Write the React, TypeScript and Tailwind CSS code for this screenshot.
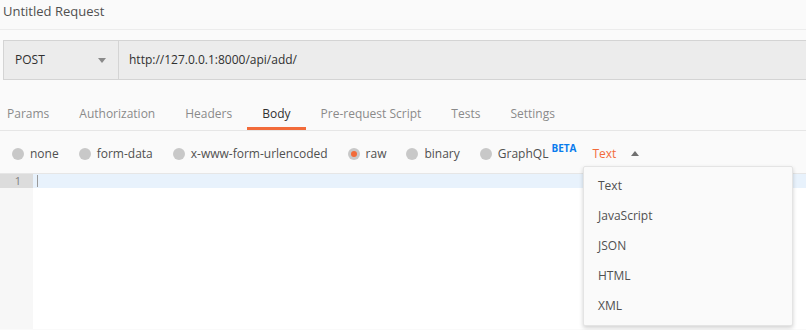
const tabs = ['Params', 'Authorization', 'Headers', 'Body', 'Pre-request Script', 'Tests', 'Settings'];
const bodyTypes = ['none', 'form-data', 'x-www-form-urlencoded', 'raw', 'binary', 'GraphQL'];
const languages = ['Text', 'JavaScript', 'JSON', 'HTML', 'XML'];

function Radio({ label, checked }: { label: string; checked?: boolean }) {
  return (
    <div className="flex items-center gap-[6px]">
      <span className="flex h-[12px] w-[12px] items-center justify-center rounded-full bg-[#c8c8c8]">
        {checked && <span className="h-[6px] w-[6px] rounded-full bg-[#f26b3a]" />}
      </span>
      <span className="text-[#505050]">{label}</span>
    </div>
  );
}

export default function App() {
  return (
    <div
      className="relative h-[330px] w-[806px] overflow-hidden bg-[#fafafa] text-[12px] text-[#505050]"
      style={{ fontFamily: '"Open Sans", "Noto Sans", sans-serif' }}
    >
      {/* title */}
      <div className="h-[30px] border-b border-[#ececec] pl-[3px] pt-[1px] text-[13px] leading-[20px] text-[#505050]">
        Untitled Request
      </div>

      {/* url bar */}
      <div className="mt-[10px] ml-[3px] flex h-[40px] border-y border-l border-[#d4d4d4] bg-[#ececec]">
        <div className="flex w-[115px] items-center justify-between border-r border-[#d4d4d4] pl-[11px] pr-[12px] text-[#303030]">
          <span>POST</span>
          <svg width="8" height="5" viewBox="0 0 8 5" className="mt-[1px]">
            <path d="M0 0h8L4 5z" fill="#8a8a8a" />
          </svg>
        </div>
        <div className="flex flex-1 items-center pl-[10px] text-[#303030]">http://127.0.0.1:8000/api/add/</div>
      </div>

      {/* tabs */}
      <div className="mt-[12px] flex h-[39px] border-b border-[#e6e6e6]">
        <div className="-ml-[8px] flex">
          {tabs.map((t) => (
            <div
              key={t}
              className={
                t === 'Body'
                  ? 'flex items-center border-b-[3px] border-[#f26b3a] px-[15px] pt-[8px] text-[#303030]'
                  : 'flex items-center border-b-[3px] border-transparent px-[15px] pt-[8px] text-[#8a8a8a]'
              }
            >
              {t}
            </div>
          ))}
        </div>
      </div>

      {/* body types */}
      <div className="flex h-[42px] items-center gap-[20px] pl-[12px] pt-[3px]">
        {bodyTypes.map((b) =>
          b === 'GraphQL' ? (
            <div key={b} className="flex items-start">
              <Radio label={b} />
              <span className="ml-[3px] -mt-[4px] text-[10px] font-bold text-[#097bed]">BETA</span>
            </div>
          ) : (
            <Radio key={b} label={b} checked={b === 'raw'} />
          )
        )}
        <div className="-ml-[4px] flex items-center gap-[15px]">
          <span className="text-[#f26b3a]">Text</span>
          <svg width="8" height="5" viewBox="0 0 8 5">
            <path d="M4 0l4 5H0z" fill="#707070" />
          </svg>
        </div>
      </div>

      {/* editor */}
      <div className="flex h-[156px] border-t border-[#e6e6e6] bg-white">
        <div className="w-[33px] bg-[#f7f7f7]">
          <div className="h-[14px] bg-[#dcdcdc] pr-[12px] text-right text-[11px] leading-[14px] text-[#808080]">1</div>
        </div>
        <div className="flex-1">
          <div className="flex h-[14px] items-center bg-[#e8f2fc] pl-[4px]">
            <span className="h-[12px] w-px bg-[#9a9a9a]" />
          </div>
        </div>
      </div>

      {/* language dropdown */}
      <div className="absolute left-[583px] top-[166px] w-[210px] rounded-[2px] border border-[#e4e4e4] bg-[#fafafa] py-[4px] shadow-[0_2px_4px_rgba(0,0,0,0.18)]">
        {languages.map((l) => (
          <div key={l} className="flex h-[30px] items-center pl-[14px] text-[#505050]">
            {l}
          </div>
        ))}
      </div>
    </div>
  );
}
